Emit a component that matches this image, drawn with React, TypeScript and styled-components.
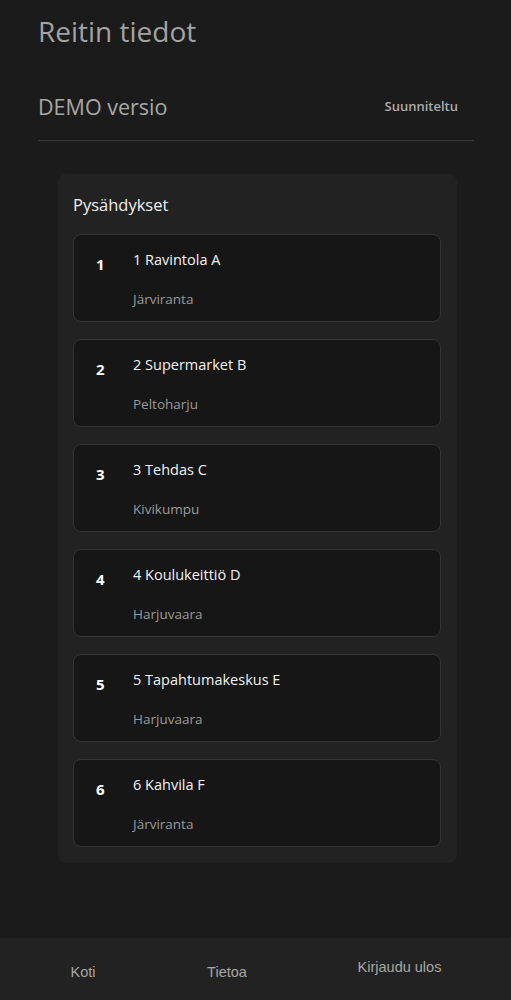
import React from 'react';
import styled, { createGlobalStyle } from 'styled-components';

// stops on the route
const stops = [
  { id: 1, name: '1 Ravintola A', area: 'Järviranta' },
  { id: 2, name: '2 Supermarket B', area: 'Peltoharju' },
  { id: 3, name: '3 Tehdas C', area: 'Kivikumpu' },
  { id: 4, name: '4 Koulukeittiö D', area: 'Harjuvaara' },
  { id: 5, name: '5 Tapahtumakeskus E', area: 'Harjuvaara' },
  { id: 6, name: '6 Kahvila F', area: 'Järviranta' },
];

const GlobalStyle = createGlobalStyle`
  html, body {
    margin: 0;
    padding: 0;
    background: #1b1b1b;
    font-family: "Open Sans", "Noto Sans", sans-serif;
  }
`;

export default function App() {
  return (
    <>
      <GlobalStyle />
      <Page>
        <Main>
          <Title>Reitin tiedot</Title>
          <HeaderRow>
            <RouteName>DEMO versio</RouteName>
            <Status>Suunniteltu</Status>
          </HeaderRow>
          <Divider />
          <Panel>
            <PanelTitle>Pysähdykset</PanelTitle>
            <StopList>
              {stops.map((s) => (
                <StopCard key={s.id}>
                  <StopNumber>{s.id}</StopNumber>
                  <StopInfo>
                    <StopName>{s.name}</StopName>
                    <StopArea>{s.area}</StopArea>
                  </StopInfo>
                </StopCard>
              ))}
            </StopList>
          </Panel>
        </Main>
        <BottomNav>
          <NavItem>Koti</NavItem>
          <NavItem>Tietoa</NavItem>
          <NavButton>Kirjaudu ulos</NavButton>
        </BottomNav>
      </Page>
    </>
  );
}

const Page = styled.div`
  min-height: 1000px;
  display: flex;
  flex-direction: column;
  background: #1b1b1b;
`;

const Main = styled.main`
  flex: 1;
  padding: 11px 37px 0 38px;
`;

const Title = styled.h1`
  margin: 0;
  font-size: 28px;
  font-weight: 400;
  color: #a3a3a3;
  line-height: 40px;
`;

const HeaderRow = styled.div`
  display: flex;
  justify-content: space-between;
  align-items: center;
  margin-top: 35px;
  padding-right: 16px;
  height: 40px;
`;

const RouteName = styled.h2`
  margin: 0;
  font-size: 21.5px;
  font-weight: 400;
  color: #a8a8a8;
`;

const Status = styled.span`
  font-size: 13px;
  font-weight: 600;
  color: #acacac;
`;

const Divider = styled.hr`
  margin: 14px 0 0;
  border: none;
  border-top: 1px solid #3a3a3a;
`;

const Panel = styled.section`
  margin: 33px 17px 0 20px;
  padding: 17px 16px 16px 15px;
  background: #222222;
  border-radius: 8px;
`;

const PanelTitle = styled.h3`
  margin: 0 0 15px;
  font-size: 16.5px;
  font-weight: 400;
  color: #f0f0f0;
  line-height: 28px;
`;

const StopList = styled.div`
  display: flex;
  flex-direction: column;
  gap: 17px;
`;

const StopCard = styled.div`
  display: flex;
  height: 88px;
  box-sizing: border-box;
  background: #161616;
  border: 1px solid #343434;
  border-radius: 8px;
`;

const StopNumber = styled.div`
  width: 59px;
  padding-top: 19px;
  padding-left: 22px;
  box-sizing: border-box;
  font-size: 15px;
  font-weight: 700;
  color: #ffffff;
`;

const StopInfo = styled.div`
  display: flex;
  flex-direction: column;
  padding-top: 15px;
`;

const StopName = styled.div`
  font-size: 14.5px;
  color: #f2f2f2;
  line-height: 20px;
`;

const StopArea = styled.div`
  margin-top: 19px;
  font-size: 13.5px;
  color: #9a9a9a;
  line-height: 20px;
`;

const BottomNav = styled.nav`
  height: 62px;
  display: grid;
  grid-template-columns: 166px 122px 1fr;
  background: #222222;
`;

const NavItem = styled.a`
  display: flex;
  align-items: center;
  justify-content: center;
  font-family: "Liberation Sans", Arial, sans-serif;
  font-size: 14.5px;
  color: #a6a6a6;
  padding-top: 5px;
`;

const NavButton = styled.button`
  background: transparent;
  border: none;
  font-family: "Liberation Sans", Arial, sans-serif;
  font-size: 14.5px;
  color: #a6a6a6;
  padding: 0 0 4px;
`;
